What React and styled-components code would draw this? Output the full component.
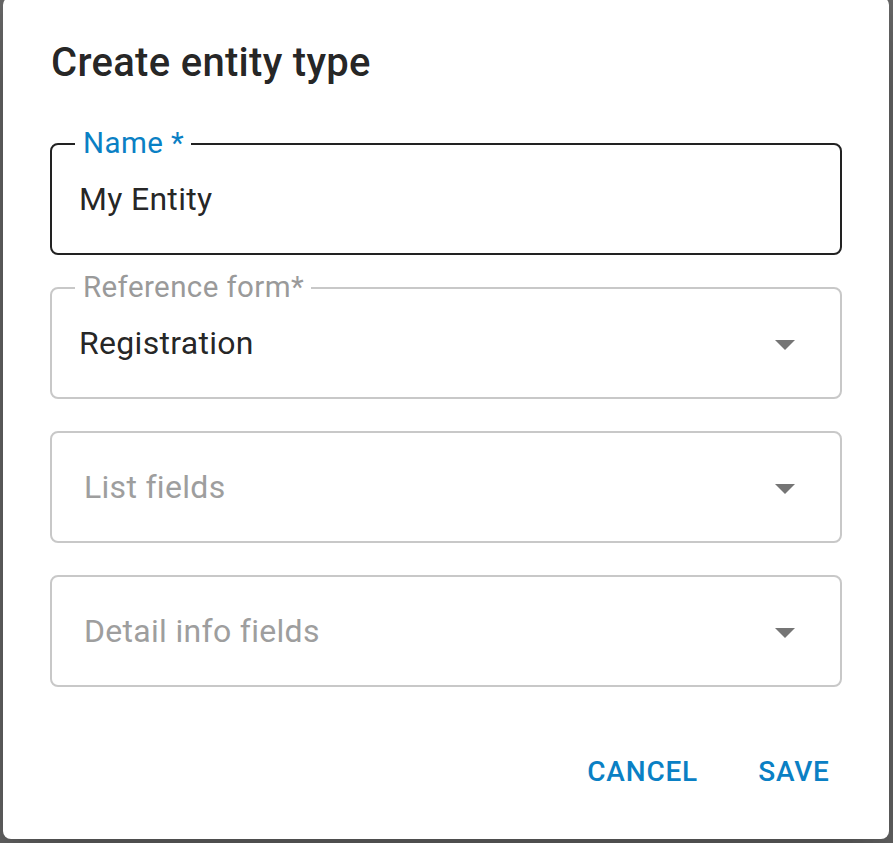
import React from "react";
import styled, { createGlobalStyle } from "styled-components";

const GlobalStyle = createGlobalStyle`
  html, body {
    margin: 0;
    padding: 0;
    background: #6b6b6b;
    font-family: Roboto, "Noto Sans", "Liberation Sans", sans-serif;
    overflow: hidden;
  }
`;

const Backdrop = styled.div`
  width: 893px;
  height: 843px;
  display: flex;
  align-items: flex-start;
  padding-left: 3px;
  box-sizing: border-box;
  background: #6b6b6b;
`;

const Dialog = styled.div`
  width: 886px;
  height: 842px;
  margin-top: -3px;
  background: #fff;
  border-radius: 8px;
  box-shadow: 0 22px 70px 8px rgba(0, 0, 0, 0.2), 0 48px 76px 6px rgba(0, 0, 0, 0.14);
  display: flex;
  flex-direction: column;
  box-sizing: border-box;
`;

const Title = styled.h2`
  margin: 0;
  padding: 34px 48px 0;
  font-size: 40px;
  font-weight: 500;
  line-height: 64px;
  letter-spacing: 0.3px;
  color: rgba(0, 0, 0, 0.87);
`;

const Content = styled.div`
  padding: 48px 47px 0 47px;
  display: flex;
  flex-direction: column;
  gap: 32px;
`;

const Field = styled.div`
  position: relative;
  height: 112px;
  box-sizing: border-box;
  border: 2px solid ${(p) => (p.$active ? "#222" : "#c8c8c8")};
  border-radius: 8px;
  display: flex;
  align-items: center;
  padding: 0 30px 0 27px;
`;

const Label = styled.span`
  position: absolute;
  top: -19px;
  left: 23px;
  padding: 0 7px 0 8px;
  background: #fff;
  font-size: 29.5px;
  line-height: 34px;
  letter-spacing: 0.4px;
  color: ${(p) => (p.$active ? "#0a80c4" : "#9a9a9a")};
`;

const Value = styled.span`
  flex: 1;
  font-size: 32px;
  line-height: 40px;
  letter-spacing: 0.3px;
  color: ${(p) => (p.$placeholder ? "#9e9e9e" : "rgba(0, 0, 0, 0.87)")};
  padding-left: ${(p) => (p.$placeholder ? "5px" : "0")};
`;

const Arrow = styled.svg`
  width: 48px;
  height: 48px;
  fill: #757575;
  margin-right: 1px;
  margin-top: 2px;
`;

const Actions = styled.div`
  margin-top: auto;
  display: flex;
  justify-content: flex-end;
  gap: 16px;
  padding: 0 31px 31px;
`;

const TextButton = styled.button`
  min-width: 128px;
  padding: 12px 16px;
  border: none;
  background: transparent;
  font-family: inherit;
  font-size: 28px;
  font-weight: 500;
  line-height: 49px;
  letter-spacing: 0.8px;
  text-transform: uppercase;
  color: #0a80c4;
  border-radius: 8px;
  cursor: pointer;
`;

const DropArrow = () => (
  <Arrow viewBox="0 0 24 24">
    <path d="M7 10l5 5 5-5z" />
  </Arrow>
);

const fields = [
  { label: "Reference form*", value: "Registration" },
  { placeholder: "List fields" },
  { placeholder: "Detail info fields" },
];

export default function App() {
  return (
    <>
      <GlobalStyle />
      <Backdrop>
        <Dialog>
          <Title>Create entity type</Title>
          <Content>
            <Field $active>
              <Label $active>Name *</Label>
              <Value>My Entity</Value>
            </Field>
            {fields.map((f) => (
              <Field key={f.label || f.placeholder}>
                {f.label && <Label>{f.label}</Label>}
                <Value $placeholder={!f.value}>{f.value || f.placeholder}</Value>
                <DropArrow />
              </Field>
            ))}
          </Content>
          <Actions>
            <TextButton>Cancel</TextButton>
            <TextButton>Save</TextButton>
          </Actions>
        </Dialog>
      </Backdrop>
    </>
  );
}
